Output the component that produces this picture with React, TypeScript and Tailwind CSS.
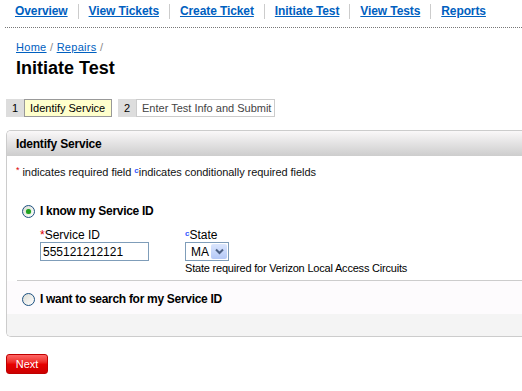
const navLinks = ["Overview", "View Tickets", "Create Ticket", "Initiate Test", "View Tests", "Reports"];

function Radio({ checked }: { checked?: boolean }) {
  return (
    <span className="flex h-[13px] w-[13px] shrink-0 items-center justify-center rounded-full border border-[#1c5180] bg-linear-to-br from-[#dcdcd5] to-[#ffffff]">
      {checked && <span className="h-[5px] w-[5px] rounded-full bg-[#21a121] shadow-[0_0_1px_#5fd85f]" />}
    </span>
  );
}

export default function App() {
  return (
    <div className="min-h-[391px] w-[522px] overflow-hidden bg-white font-['Liberation_Sans',Arial,sans-serif] text-black">
      <nav className="ml-[5px] flex h-[28px] items-center border-b border-dotted border-[#777] pb-[5px] pl-[10px]">
        {navLinks.map((l, i) => (
          <div key={l} className="flex items-center">
            {i > 0 && <span className="mx-[10px] h-[15px] w-px bg-[#cccccc]" />}
            <a className="text-[12px] leading-[15px] font-bold tracking-[-0.1px] text-[#0060c0] underline">{l}</a>
          </div>
        ))}
      </nav>

      <div className="mt-[12px] h-[14px] pl-[16px] text-[11px] leading-[14px] tracking-[0.3px]">
        <a className="text-[#0060c0] underline">Home</a>
        <span className="text-[#888]"> / </span>
        <a className="text-[#0060c0] underline">Repairs</a>
        <span className="text-[#888]"> /</span>
      </div>

      <h1 className="mt-[3px] pl-[16px] text-[18px] leading-[22px] font-bold">Initiate Test</h1>

      <div className="mt-[20px] ml-[6px] flex h-[18px] text-[11px] leading-[16px]">
        <span className="flex w-[18px] items-center justify-center bg-[#dddddd]">1</span>
        <span className="flex w-[88px] items-center border border-[#999] bg-[#ffffcc] pl-[5px]">Identify Service</span>
        <span className="ml-[6px] flex w-[18px] items-center justify-center bg-[#dddddd]">2</span>
        <span className="flex w-[139px] items-center border border-[#cccccc] bg-white pl-[5px] text-[#444]">Enter Test Info and Submit</span>
      </div>

      <section className="mt-[13px] ml-[6px] overflow-hidden rounded-l-[5px] border border-r-0 border-[#cccccc]">
        <div className="flex h-[25px] items-center bg-linear-to-b from-[#faf8f9] to-[#cdcdcd] pl-[9px] text-[12px] font-bold tracking-[-0.2px]">
          Identify Service
        </div>

        <p className="mt-[9px] h-[14px] pl-[9px] text-[11px] leading-[14px] tracking-[-0.05px] text-[#111]">
          <span className="relative top-[-3px] text-[9px] text-[#dd0000]">*</span> indicates required field{" "}
          <span className="relative top-[-3px] text-[8px] font-bold text-[#3355ff]">c</span>indicates conditionally required fields
        </p>

        <div className="mt-[24px] flex h-[16px] items-center gap-[5px] pl-[15px]">
          <Radio checked />
          <span className="text-[12px] font-bold tracking-[-0.3px]">I know my Service ID</span>
        </div>

        <div className="mt-[9px] flex pl-[33px] text-[12px]">
          <div className="w-[145px]">
            <div className="h-[14px] leading-[14px]">
              <span className="text-[#dd0000]">*</span>Service ID
            </div>
            <div className="flex h-[19px] w-[109px] items-center border border-[#7f9db9] pl-[2px]">555121212121</div>
          </div>
          <div>
            <div className="h-[14px] leading-[14px]">
              <span className="relative top-[-3px] text-[8px] font-bold text-[#3355ff]">c</span>State
            </div>
            <div className="flex h-[19px] w-[44px] items-center justify-between border border-[#7f9db9] p-px pl-[5px]">
              <span>MA</span>
              <span className="flex h-full w-[16px] items-center justify-center rounded-[2px] bg-linear-to-b from-[#dbe6fd] to-[#b4c8f6]">
                <svg width="9" height="7" viewBox="0 0 9 7">
                  <path d="M1 1.5 L4.5 5 L8 1.5" fill="none" stroke="#4d6185" strokeWidth="2" />
                </svg>
              </span>
            </div>
            <div className="mt-[1px] text-[11px] leading-[13px] tracking-[-0.2px] whitespace-nowrap">State required for Verizon Local Access Circuits</div>
          </div>
        </div>

        <div className="mt-[5px] ml-[10px] border-t border-[#cccccc]" />
        <div className="flex h-[33px] items-center gap-[5px] bg-[#fdfbfd] pt-[3px] pl-[15px]">
          <Radio />
          <span className="text-[12px] font-bold tracking-[-0.3px]">I want to search for my Service ID</span>
        </div>
        <div className="h-[22px] bg-[#f4f4f4]" />
      </section>

      <button className="mt-[17px] ml-[6px] flex h-[20px] w-[42px] items-center justify-center rounded-[3px] border border-[#c00000] bg-linear-to-b from-[#ff6666] via-[#e80000] to-[#cc0000] text-[11px] text-white">
        Next
      </button>
    </div>
  );
}
